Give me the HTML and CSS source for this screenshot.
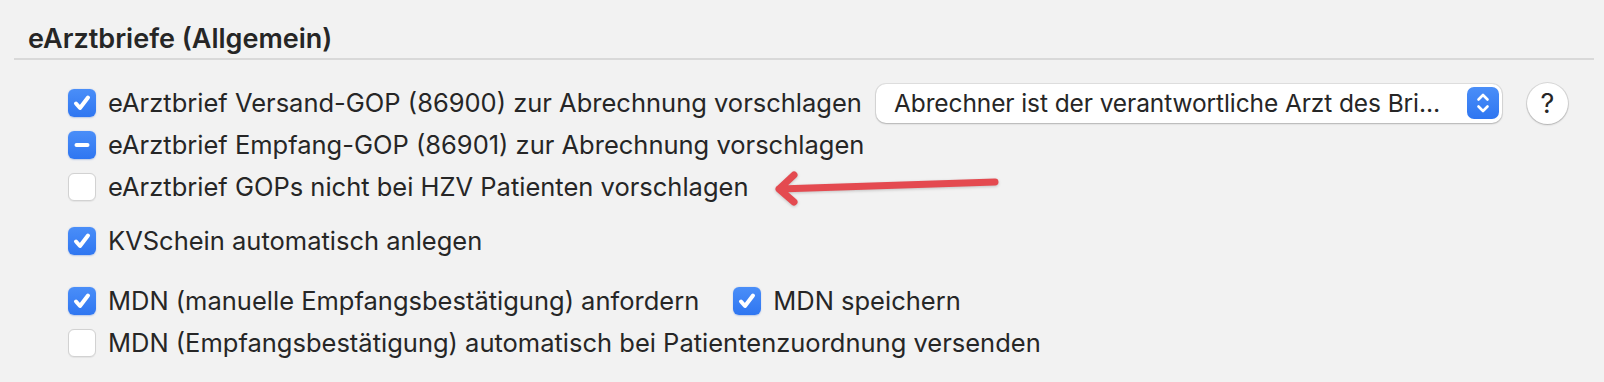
FILE: index.html
```html
<!DOCTYPE html>
<html lang="de">
<head>
<meta charset="utf-8">
<title>eArztbriefe (Allgemein)</title>
<link rel="stylesheet" href="styles.css">
</head>
<body>
<div class="pane">
  <h2 class="section-title">eArztbriefe (Allgemein)</h2>
  <div class="rule"></div>
  <div class="options">
    <div class="row">
      <label class="check">
        <span class="box on"><svg viewBox="0 0 28 28"><path d="M8 14.5l4 4.5 8-10.5" /></svg></span>
        <span class="label">eArztbrief Versand-GOP (86900) zur Abrechnung vorschlagen</span>
      </label>
      <div class="popup">
        <span class="popup-text">Abrechner ist der verantwortliche Arzt des Bri…</span>
        <span class="stepper"><svg viewBox="0 0 32 32"><path d="M11.5 12.5l4.5-4.5 4.5 4.5M11.5 19.5l4.5 4.5 4.5-4.5" /></svg></span>
      </div>
      <button class="help">?</button>
    </div>
    <div class="row">
      <label class="check">
        <span class="box on"><svg viewBox="0 0 28 28"><path d="M8.5 14h11" /></svg></span>
        <span class="label">eArztbrief Empfang-GOP (86901) zur Abrechnung vorschlagen</span>
      </label>
    </div>
    <div class="row">
      <label class="check">
        <span class="box"></span>
        <span class="label">eArztbrief GOPs nicht bei HZV Patienten vorschlagen</span>
      </label>
    </div>
    <div class="row gap-s">
      <label class="check">
        <span class="box on"><svg viewBox="0 0 28 28"><path d="M8 14.5l4 4.5 8-10.5" /></svg></span>
        <span class="label">KVSchein automatisch anlegen</span>
      </label>
    </div>
    <div class="row gap-m">
      <label class="check">
        <span class="box on"><svg viewBox="0 0 28 28"><path d="M8 14.5l4 4.5 8-10.5" /></svg></span>
        <span class="label">MDN (manuelle Empfangsbestätigung) anfordern</span>
      </label>
      <label class="check second">
        <span class="box on"><svg viewBox="0 0 28 28"><path d="M8 14.5l4 4.5 8-10.5" /></svg></span>
        <span class="label">MDN speichern</span>
      </label>
    </div>
    <div class="row">
      <label class="check">
        <span class="box"></span>
        <span class="label">MDN (Empfangsbestätigung) automatisch bei Patientenzuordnung versenden</span>
      </label>
    </div>
  </div>
  <svg class="arrow" width="240" height="44" viewBox="0 0 240 44">
    <path d="M229 11L13 18M28 4L13 18l15 13" />
  </svg>
</div>
</body>
</html>
```

FILE: styles.css
```css
html, body {
  margin: 0;
  padding: 0;
  background: #f2f2f2;
}
body {
  font-family: Inter, "Noto Sans", "Liberation Sans", sans-serif;
  color: #262626;
  width: 1604px;
  height: 382px;
  overflow: hidden;
}
.pane {
  position: relative;
  padding: 0 10px 0 14px;
}
.section-title {
  margin: 0;
  padding: 24px 0 0 14px;
  font-size: 27px;
  line-height: 30px;
  font-weight: 600;
  color: #262626;
}
.rule {
  margin-top: 4px;
  height: 2px;
  background: #d9d9d9;
}
.options {
  padding: 22px 0 0 54px;
}
.row {
  display: flex;
  align-items: center;
  height: 42px;
}
.row.gap-s { margin-top: 12px; }
.row.gap-m { margin-top: 18px; }
.check {
  display: flex;
  align-items: center;
  gap: 12px;
  font-size: 25.5px;
  line-height: 32px;
  white-space: nowrap;
}
.check.second { margin-left: 34px; }
.box {
  box-sizing: border-box;
  width: 28px;
  height: 28px;
  border-radius: 6px;
  background: #fff;
  border: 1px solid #d2d2d2;
  box-shadow: 0 0.5px 1px rgba(0,0,0,0.06);
  flex: none;
  display: flex;
}
.box.on {
  border: none;
  background: linear-gradient(#4a8ef8, #2f76f1);
  box-shadow: 0 0.5px 1.5px rgba(20,80,200,0.25);
}
.box svg {
  width: 28px;
  height: 28px;
}
.box svg path {
  fill: none;
  stroke: #fff;
  stroke-width: 4;
  stroke-linecap: round;
  stroke-linejoin: round;
}
.popup {
  box-sizing: border-box;
  margin-left: 14px;
  width: 626px;
  height: 39px;
  background: #fff;
  border-radius: 10px;
  box-shadow: 0 0 0 1px rgba(0,0,0,0.08), 0 1px 2px rgba(0,0,0,0.2);
  display: flex;
  align-items: center;
  justify-content: space-between;
  padding: 0 3px 0 18px;
  font-size: 24.5px;
  letter-spacing: -0.1px;
}
.popup-text {
  white-space: nowrap;
}
.stepper {
  flex: none;
  width: 32px;
  height: 32px;
  border-radius: 7px;
  background: linear-gradient(#4a8ef8, #2f76f1);
  display: flex;
}
.stepper svg {
  width: 32px;
  height: 32px;
}
.stepper path {
  fill: none;
  stroke: #fff;
  stroke-width: 2.6;
  stroke-linecap: round;
  stroke-linejoin: round;
}
.help {
  margin-left: 25px;
  width: 41px;
  height: 41px;
  border-radius: 50%;
  border: none;
  background: #fff;
  box-shadow: 0 0 0 1px rgba(0,0,0,0.1), 0 1px 2px rgba(0,0,0,0.2);
  font-family: Inter, "Noto Sans", sans-serif;
  font-size: 27px;
  font-weight: 400;
  color: #262626;
  padding: 0;
  display: flex;
  align-items: center;
  justify-content: center;
}
.arrow {
  position: absolute;
  left: 766px;
  top: 171px;
  overflow: visible;
}
.arrow path {
  fill: none;
  stroke: #e44a50;
  stroke-width: 7;
  stroke-linecap: round;
  stroke-linejoin: round;
  filter: drop-shadow(0 1px 1.5px rgba(0,0,0,0.2));
}
```
